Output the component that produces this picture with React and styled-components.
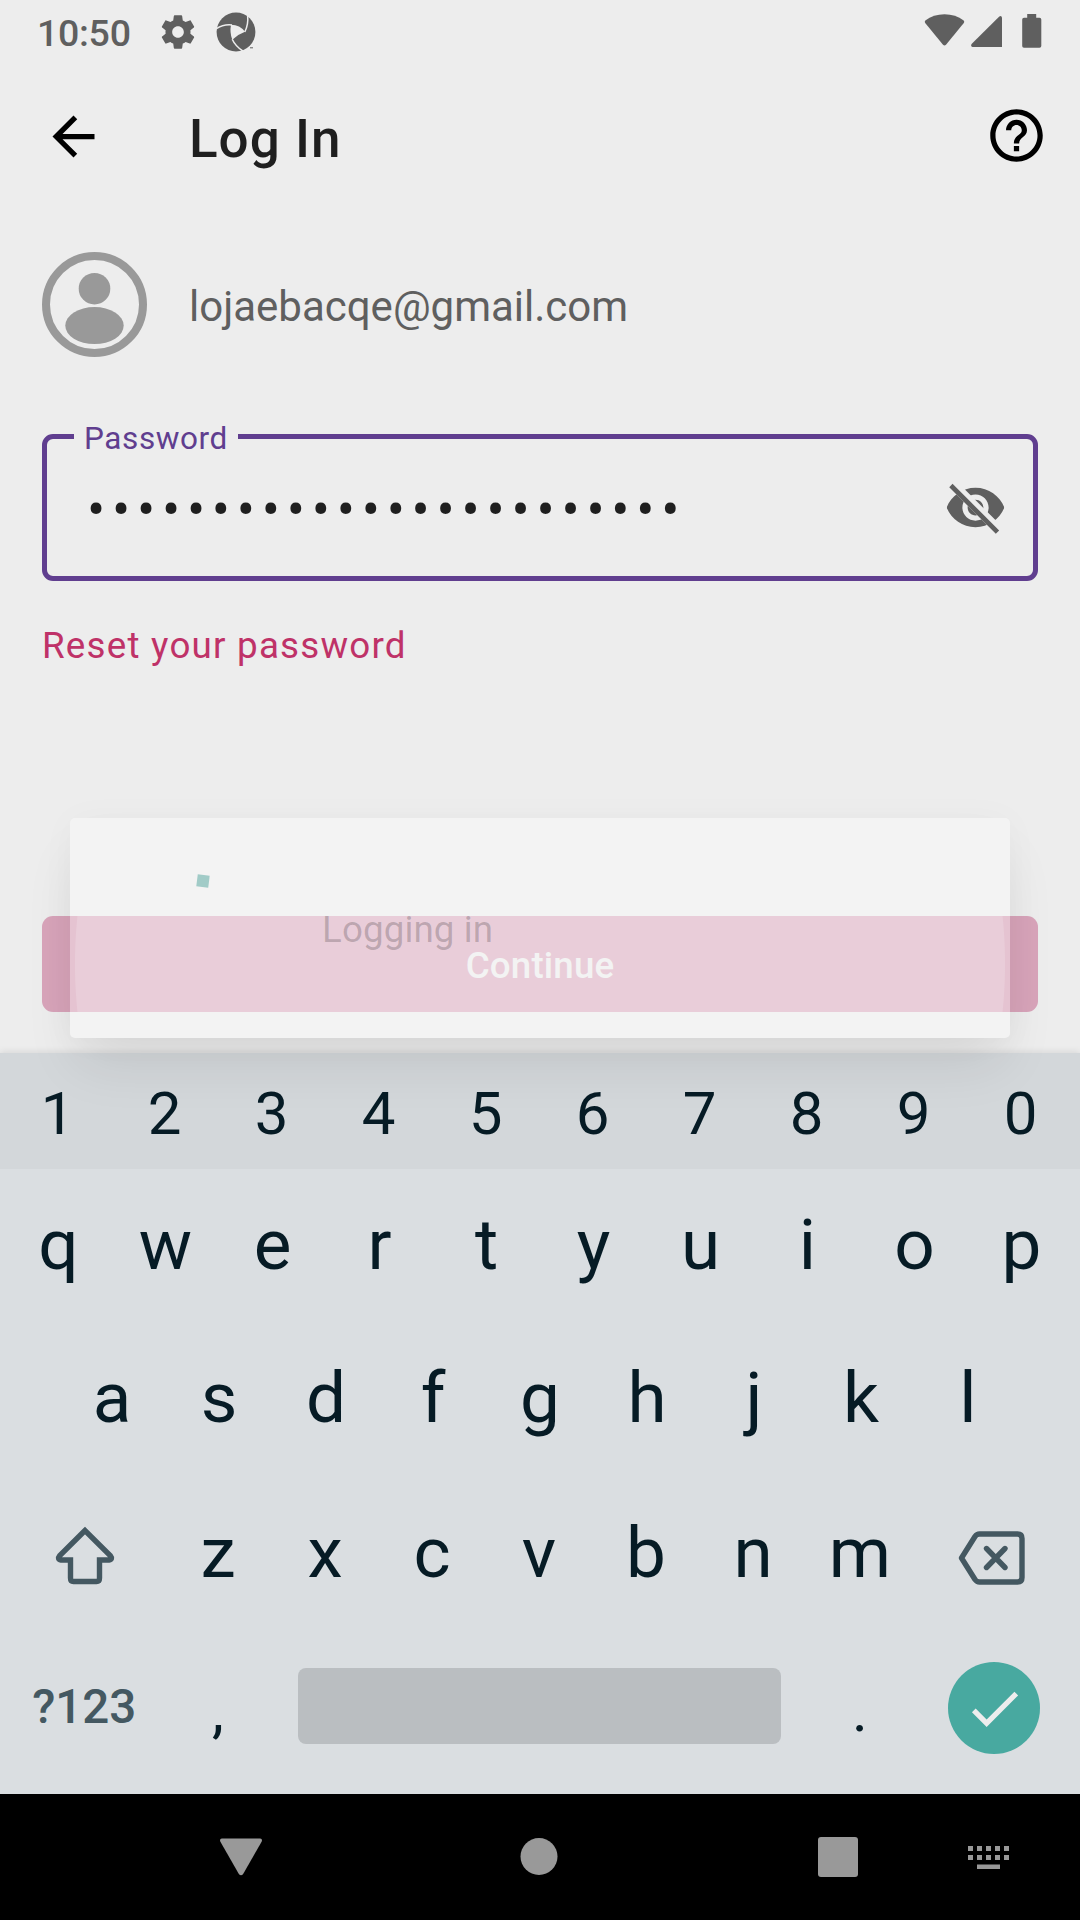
import React from "react";
import styled, { createGlobalStyle } from "styled-components";

const GlobalStyle = createGlobalStyle`
  * { box-sizing: border-box; }
  body { margin: 0; background: #ededed; }
`;

const Phone = styled.div`
  position: relative;
  width: 1080px;
  height: 1920px;
  overflow: hidden;
  display: flex;
  flex-direction: column;
  background: #ededed;
  font-family: Roboto, "Liberation Sans", sans-serif;
  color: #1f1f1f;
  svg { display: block; flex: none; }
`;

const StatusBar = styled.header`
  height: 63px;
  display: flex;
  align-items: flex-start;
  padding: 0 38px 0 37px;
  color: #5f5f5f;
`;

const Clock = styled.span`
  width: 121px;
  padding-top: 1px;
  font-size: 37.5px;
  font-weight: 500;
  line-height: 64px;
  letter-spacing: -0.3px;
`;

const Notifications = styled.div`
  display: flex;
  gap: 18px;
  padding-top: 12px;
`;

const SystemIcons = styled.div`
  display: flex;
  margin-left: auto;
  gap: 6px;
  svg:last-child { margin-left: 14px; }
`;

const AppBar = styled.div`
  height: 147px;
  display: flex;
  align-items: center;
  padding: 0 32px 0 42px;
  svg:last-child { margin-bottom: 2px; }
`;

const Title = styled.h1`
  flex: 1;
  margin: 0 0 0 84px;
  padding-top: 4px;
  font-size: 53px;
  font-weight: 500;
  line-height: 60px;
  letter-spacing: 1px;
`;

const Content = styled.main`
  height: 843px;
  display: flex;
  flex-direction: column;
  padding: 42px 42px 0;
`;

const Account = styled.div`
  height: 105px;
  display: flex;
  align-items: center;
  gap: 42px;
`;

const Email = styled.span`
  padding-top: 4px;
  font-size: 42px;
  line-height: 50px;
  color: #5f5f5f;
`;

const Field = styled.div`
  position: relative;
  height: 147px;
  margin-top: 77px;
  display: flex;
  align-items: center;
  justify-content: space-between;
  padding: 0 26px 0 40px;
  border: 5px solid #603e8f;
  border-radius: 11px;
`;

const FieldLabel = styled.label`
  position: absolute;
  left: 27px;
  top: -18px;
  padding: 0 10px;
  background: #ededed;
  color: #603e8f;
  font-size: 31.5px;
  line-height: 36px;
  letter-spacing: 0.6px;
`;

const Dots = styled.span`
  padding-top: 4px;
  font-size: 54px;
  line-height: 50px;
  letter-spacing: 6.75px;
`;

const ResetLink = styled.a`
  margin-top: 44px;
  font-size: 36.75px;
  line-height: 42px;
  letter-spacing: 1.22px;
  color: #bf3268;
`;

const ContinueButton = styled.button`
  height: 96px;
  flex: none;
  margin: auto 0 41px;
  padding: 3px 0 0;
  border: 0;
  border-radius: 11px;
  background: radial-gradient(circle 465px at center, #deb4c5 464.5px, #d8a4ba 465.5px);
  color: #ededed;
  font-family: inherit;
  font-size: 36.75px;
  font-weight: 500;
  line-height: 42px;
  letter-spacing: 0.15px;
`;

const Dialog = styled.div`
  position: absolute;
  z-index: 2;
  left: 70px;
  top: 818px;
  width: 940px;
  height: 220px;
  display: flex;
  border-radius: 5px;
  background: rgba(255, 255, 255, 0.34);
  box-shadow: 0 32px 52px -8px rgba(0, 0, 0, 0.09), 0 2px 36px rgba(0, 0, 0, 0.03);
`;

const Spinner = styled.div`
  width: 12px;
  height: 12px;
  margin: 57px 0 0 127px;
  background: #a1cbc7;
  transform: rotate(7deg);
`;

const DialogText = styled.p`
  margin: 91px 0 0 113px;
  font-size: 36.75px;
  line-height: 42px;
  letter-spacing: 0.1px;
  color: rgba(0, 0, 0, 0.2);
`;

const Keyboard = styled.section`
  height: 741px;
  display: flex;
  flex-direction: column;
  background: #dadee1;
  box-shadow: 0 -1px 7px rgba(0, 0, 0, 0.1);
  color: #061b25;
`;

const KeyRow = styled.div`
  height: ${(p) => p.$h}px;
  display: flex;
  padding: ${(p) => p.$top || 0}px ${(p) => p.$right ?? 6}px ${(p) => p.$bottom || 0}px ${(p) => p.$left ?? 4}px;
  background: ${(p) => (p.$numbers ? "#d3d7da" : "transparent")};
  font-size: ${(p) => (p.$numbers ? 60 : 71)}px;
`;

const Key = styled.div`
  flex: ${(p) => p.$span || 1} 1 0;
  min-width: 0;
  display: flex;
  align-items: center;
  justify-content: center;
  line-height: 1;
`;

const ShiftKey = styled(Key)`
  svg { margin: 6px 0 0 1px; }
`;

const BackspaceKey = styled(Key)`
  svg { margin: 10px 3px 0 0; }
`;

const ModeKey = styled(Key)`
  padding-top: 4px;
  font-size: 47.5px;
  font-weight: 500;
  color: #445861;
`;

const PunctuationKey = styled(Key)`
  padding-top: 9px;
  font-size: 60px;
`;

const SpaceBar = styled.div`
  width: 483px;
  height: 76px;
  border-radius: 8px;
  background: #babec1;
`;

const DoneButton = styled.div`
  width: 92px;
  height: 92px;
  margin: 4px 0 0 1px;
  display: flex;
  align-items: center;
  justify-content: center;
  border-radius: 50%;
  background: #48a9a0;
  flex: none;
`;

const NavBar = styled.nav`
  height: 126px;
  display: flex;
  align-items: center;
  padding-left: 91.5px;
  background: #000;
`;

const NavItem = styled.div`
  width: ${(p) => p.$w}px;
  display: flex;
  justify-content: center;
`;

const Material = ({ size, color = "currentColor", d }) => (
  <svg width={size} height={size} viewBox="0 0 24 24" fill={color}>
    <path d={d} />
  </svg>
);

const GEAR =
  "M19.43 12.98c.04-.32.07-.64.07-.98s-.03-.66-.07-.98l2.11-1.65c.19-.15.24-.42.12-.64l-2-3.46c-.12-.22-.39-.3-.61-.22l-2.49 1c-.52-.4-1.08-.73-1.69-.98l-.38-2.65C14.46 2.18 14.25 2 14 2h-4c-.25 0-.46.18-.49.42l-.38 2.65c-.61.25-1.17.59-1.69.98l-2.49-1c-.23-.09-.49 0-.61.22l-2 3.46c-.13.22-.07.49.12.64l2.11 1.65c-.04.32-.07.65-.07.98s.03.66.07.98l-2.11 1.65c-.19.15-.24.42-.12.64l2 3.46c.12.22.39.3.61.22l2.49-1c.52.4 1.08.73 1.69.98l.38 2.65c.03.24.24.42.49.42h4c.25 0 .46-.18.49-.42l.38-2.65c.61-.25 1.17-.59 1.69-.98l2.49 1c.23.09.49 0 .61-.22l2-3.46c.12-.22.07-.49-.12-.64l-2.11-1.65zM12 15.5c-1.93 0-3.5-1.57-3.5-3.5s1.57-3.5 3.5-3.5 3.5 1.57 3.5 3.5-1.57 3.5-3.5 3.5z";
const ARROW = "M20 11H7.83l5.59-5.59L12 4l-8 8 8 8 1.41-1.41L7.83 13H20v-2z";
const HELP =
  "M11 18h2v-2h-2v2zm1-16C6.48 2 2 6.48 2 12s4.48 10 10 10 10-4.48 10-10S17.52 2 12 2zm0 18c-4.41 0-8-3.59-8-8s3.59-8 8-8 8 3.59 8 8-3.59 8-8 8zm0-14c-2.21 0-4 1.79-4 4h2c0-1.1.9-2 2-2s2 .9 2 2c0 2-3 1.75-3 5h2c0-2.25 3-2.5 3-5 0-2.21-1.79-4-4-4z";
const CHECK = "M9 16.17L4.83 12l-1.42 1.41L9 19 21 7l-1.41-1.41z";

const SwirlIcon = () => (
  <svg width="40" height="40" viewBox="0 0 40 40">
    <circle cx="20" cy="20" r="19.4" fill="#5f5f5f" />
    <path d="M15 12.8Q24 13 29 19.8Q21.5 22.5 16.3 27.8Q13.5 20.5 15 12.8Z" fill="#ededed" />
    <g fill="none" stroke="#ededed" strokeWidth="1.5">
      <path d="M28.8 20Q32.6 12.5 31.6 3" />
      <path d="M16 13Q7.5 12 0 17" />
      <path d="M16.2 27.3Q19.5 34.5 27.5 39.5" />
    </g>
    <path d="M27 40L33.5 35.5L40 31V40Z" fill="#ededed" />
    <path d="M34 35.8h3" stroke="#5f5f5f" strokeWidth="1" />
  </svg>
);

const WifiIcon = () => (
  <svg width="41" height="48" viewBox="0 0 41 48" fill="#5f5f5f">
    <path d="M1.3 20.6Q.2 21.8 1.2 23.1L19 44.7Q20.5 46.2 22 44.7L39.8 23.1Q40.8 21.8 39.7 20.6Q31.5 14.3 20.5 14.3T1.3 20.6Z" />
  </svg>
);

const SignalIcon = () => (
  <svg width="31" height="48" viewBox="0 0 31 48" fill="#5f5f5f">
    <path d="M31 17.6V47H1.5Q-.8 46 .8 43.8L28.3 16.4Q30.5 15.2 31 17.6Z" />
  </svg>
);

const BatteryIcon = () => (
  <svg width="20" height="48" viewBox="0 0 20 48" fill="#5f5f5f">
    <path d="M5.2 14h9v3.8H17.5Q19.3 17.8 19.3 19.6V46Q19.3 47.8 17.5 47.8H2Q.2 47.8 .2 46V19.6Q.2 17.8 2 17.8H5.2Z" />
  </svg>
);

const Avatar = () => (
  <svg width="105" height="105" viewBox="0 0 105 105">
    <circle cx="52.5" cy="52.5" r="48.5" fill="#ededed" stroke="#999" strokeWidth="8" />
    <circle cx="52.5" cy="36.7" r="15.8" fill="#999" />
    <ellipse cx="52.5" cy="73.6" rx="29.2" ry="18.5" fill="#999" />
  </svg>
);

const EyeOff = () => (
  <svg width="63" height="63" viewBox="0 0 24 24" fill="#5f5f5f">
    <clipPath id="eye-cut">
      <path d="M2 4.27L19.73 22L22.27 19.46L4.54 1.73V1H23V23H1V4.27Z" />
    </clipPath>
    <path
      clipPath="url(#eye-cut)"
      d="M12 4.5C7 4.5 2.73 7.61 1 12c1.73 4.39 6 7.5 11 7.5s9.27-3.11 11-7.5c-1.73-4.39-6-7.5-11-7.5zM12 17c-2.76 0-5-2.24-5-5s2.24-5 5-5 5 2.24 5 5-2.24 5-5 5zm0-8c-1.66 0-3 1.34-3 3s1.34 3 3 3 3-1.34 3-3-1.34-3-3-3z"
    />
    <path d="M3.27 4.27L19.74 20.74" stroke="#5f5f5f" strokeWidth="1.8" strokeLinecap="square" />
  </svg>
);

const ShiftIcon = () => (
  <svg width="60" height="60" viewBox="0 0 60 60" fill="none" stroke="#445861" strokeWidth="5.4">
    <path d="M30 4.5L4.8 29.5Q1.8 33.3 6 34H15.5V52Q15.5 55.5 18.5 55.5H41.5Q44.5 55.5 44.5 52V34H54Q58.2 33.3 55.2 29.5Z" />
  </svg>
);

const BackspaceIcon = () => (
  <svg width="68" height="56" viewBox="0 0 68 56" fill="none" stroke="#445861" strokeWidth="5.4">
    <path d="M3.5 28L17 6.5Q18.8 4 21.5 4H59.5Q64 4 64 8.5V47.5Q64 52 59.5 52H21.5Q18.8 52 17 49.5Z" strokeLinejoin="round" />
    <path d="M28.5 18.5L47 37.5M47 18.5L28.5 37.5" strokeLinecap="round" />
  </svg>
);

const BackTriangle = () => (
  <svg width="44" height="40" viewBox="0 0 44 40" fill="#999">
    <path d="M2.8 1.5H41.2Q43.8 2 42.6 4.8L24 37.2Q22 39.5 20 37.2L1.4 4.8Q.2 2 2.8 1.5Z" />
  </svg>
);

const HomeCircle = () => (
  <svg width="38" height="38" viewBox="0 0 38 38">
    <circle cx="19" cy="18.5" r="18.5" fill="#999" />
  </svg>
);

const RecentSquare = () => (
  <svg width="40" height="40" viewBox="0 0 40 40">
    <rect x="0" y="0" width="40" height="40" rx="3" fill="#999" />
  </svg>
);

const SwitchKeyboard = styled.div`
  margin-left: -19.5px;
`;

const KeyboardIcon = () => (
  <svg width="41" height="23" viewBox="0 0 41 23" fill="#999">
    {[0, 9].map((y) =>
      [0, 9, 18, 27, 36].map((x) => <rect key={`${x}-${y}`} x={x} y={y} width="5" height="5" />)
    )}
    <rect x="9" y="18.5" width="23" height="4.5" />
  </svg>
);

const Letters = ({ text }) => [...text].map((c) => <Key key={c}>{c}</Key>);

export default function App() {
  return (
    <Phone>
      <GlobalStyle />
      <StatusBar>
        <Clock>10:50</Clock>
        <Notifications>
          <Material size={40} d={GEAR} />
          <SwirlIcon />
        </Notifications>
        <SystemIcons>
          <WifiIcon />
          <SignalIcon />
          <BatteryIcon />
        </SystemIcons>
      </StatusBar>
      <AppBar>
        <Material size={63} color="#000" d={ARROW} />
        <Title>Log In</Title>
        <Material size={63} color="#000" d={HELP} />
      </AppBar>
      <Content>
        <Account>
          <Avatar />
          <Email>lojaebacqe@gmail.com</Email>
        </Account>
        <Field>
          <FieldLabel>Password</FieldLabel>
          <Dots>{"•".repeat(24)}</Dots>
          <EyeOff />
        </Field>
        <ResetLink>Reset your password</ResetLink>
        <ContinueButton>Continue</ContinueButton>
      </Content>
      <Keyboard>
        <KeyRow $h={116} $top={5} $numbers>
          <Letters text="1234567890" />
        </KeyRow>
        <KeyRow $h={151} $left={5} $right={5}>
          <Letters text="qwertyuiop" />
        </KeyRow>
        <KeyRow $h={155} $left={58.5} $right={58.5}>
          <Letters text="asdfghjkl" />
        </KeyRow>
        <KeyRow $h={155}>
          <ShiftKey $span={1.5}>
            <ShiftIcon />
          </ShiftKey>
          <Letters text="zxcvbnm" />
          <BackspaceKey $span={1.5}>
            <BackspaceIcon />
          </BackspaceKey>
        </KeyRow>
        <KeyRow $h={164} $bottom={12}>
          <ModeKey $span={1.5}>?123</ModeKey>
          <PunctuationKey>,</PunctuationKey>
          <Key $span={5}>
            <SpaceBar />
          </Key>
          <PunctuationKey>.</PunctuationKey>
          <Key $span={1.5}>
            <DoneButton>
              <Material size={63} color="#ededed" d={CHECK} />
            </DoneButton>
          </Key>
        </KeyRow>
      </Keyboard>
      <NavBar>
        <NavItem $w={298.5}>
          <BackTriangle />
        </NavItem>
        <NavItem $w={298.5}>
          <HomeCircle />
        </NavItem>
        <NavItem $w={298.5}>
          <RecentSquare />
        </NavItem>
        <SwitchKeyboard>
          <KeyboardIcon />
        </SwitchKeyboard>
      </NavBar>
      <Dialog>
        <Spinner />
        <DialogText>Logging in</DialogText>
      </Dialog>
    </Phone>
  );
}
